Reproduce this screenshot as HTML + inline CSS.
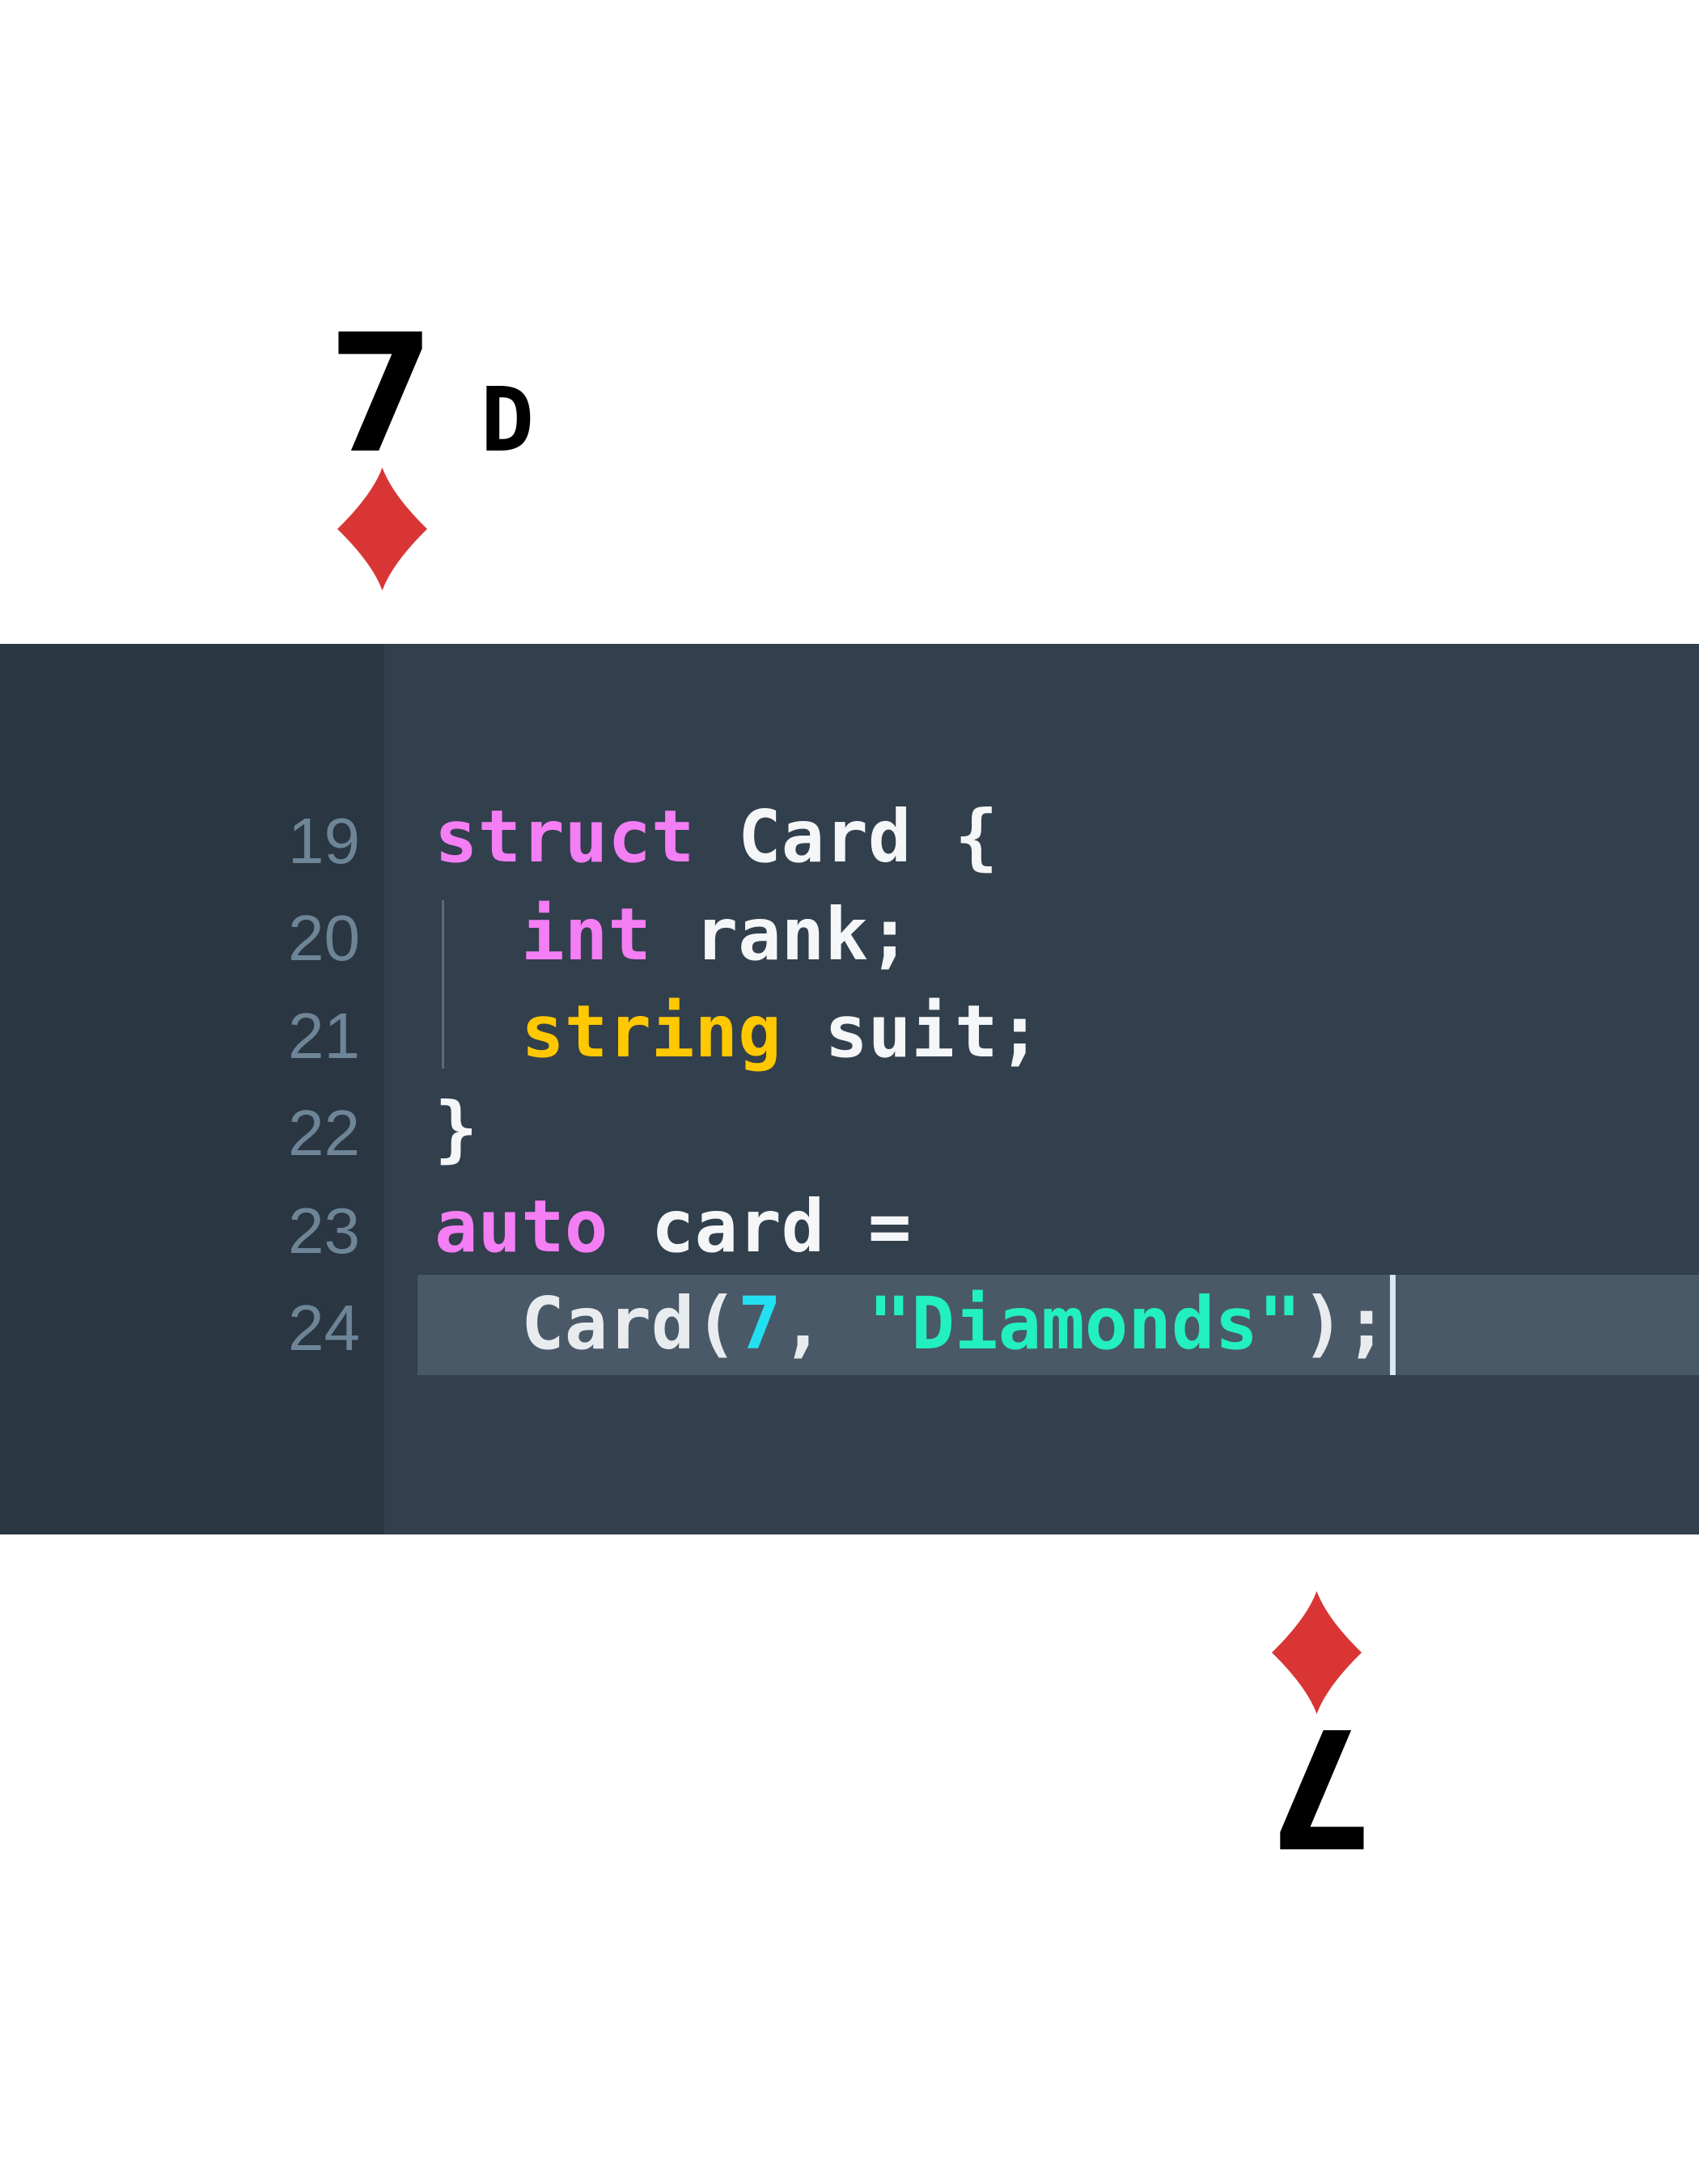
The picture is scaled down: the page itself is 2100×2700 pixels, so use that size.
<!DOCTYPE html>
<html><head><meta charset="utf-8"><style>
body{margin:0;width:2100px;height:2700px;background:#fff;position:relative;overflow:hidden}
.a{position:absolute}
.band{left:0;top:796px;width:2100px;height:1101px;background:#323f4c}
.gut{left:0;top:796px;width:475px;height:1101px;background:#2a3641}
.hl{left:516px;top:1576px;width:1584px;height:124px;background:#4a5967}
.cur{left:1718px;top:1576px;width:7px;height:124px;background:#d9e8f5}
.guide{left:546px;top:1113px;width:3px;height:208px;background:#5a6b7a}
.ln{left:300px;width:145px;text-align:right;font:80px "Liberation Sans",sans-serif;color:#6e8598;line-height:1}
.code{left:537px;font:bold 89px "DejaVu Sans Mono",monospace;color:#f5f6f7;white-space:pre;line-height:1}
.k{color:#f47ef4}.y{color:#ffc800}.c{color:#22e0f2}.s{color:#22f0c0}
.seven{font-family:"DejaVu Sans",sans-serif;font-weight:bold;font-size:202px;line-height:1;color:#000;width:141px;height:202px}
</style></head><body>
<div class="a seven" style="left:405px;top:386px;transform:scaleX(0.93);transform-origin:12px 0">7</div>
<div class="a" style="left:594px;top:464px;font:bold 110px 'DejaVu Sans Mono',monospace;line-height:1;color:#000">D</div>
<svg class="a" style="left:417px;top:578px" width="111" height="152" viewBox="0 0 111 152"><path d="M55.5,0 Q68,34 111,76 Q68,118 55.5,152 Q43,118 0,76 Q43,34 55.5,0Z" fill="#d93535"/></svg>
<svg class="a" style="left:1572px;top:1967px" width="111" height="152" viewBox="0 0 111 152"><path d="M55.5,0 Q68,34 111,76 Q68,118 55.5,152 Q43,118 0,76 Q43,34 55.5,0Z" fill="#d93535"/></svg>
<div class="a seven" style="left:1562px;top:2108px;transform:rotate(180deg) scaleX(0.93);transform-origin:50% 50%;">7</div>
<div class="a band"></div><div class="a gut"></div><div class="a hl"></div><div class="a cur"></div><div class="a guide"></div>
<div class="a ln" style="top:1000px">19</div>
<div class="a ln" style="top:1120px">20</div>
<div class="a ln" style="top:1241px">21</div>
<div class="a ln" style="top:1361px">22</div>
<div class="a ln" style="top:1482px">23</div>
<div class="a ln" style="top:1602px">24</div>
<div class="a code" style="top:990px"><span class="k">struct</span> Card {</div>
<div class="a code" style="top:1111px">  <span class="k">int</span> rank;</div>
<div class="a code" style="top:1231px">  <span class="y">string</span> suit;</div>
<div class="a code" style="top:1351px">}</div>
<div class="a code" style="top:1472px"><span class="k">auto</span> card =</div>
<div class="a code" style="top:1592px;color:#e9ecef">  Card(<span class="c">7</span>, <span class="s">"Diamonds"</span>);</div>
</body></html>
